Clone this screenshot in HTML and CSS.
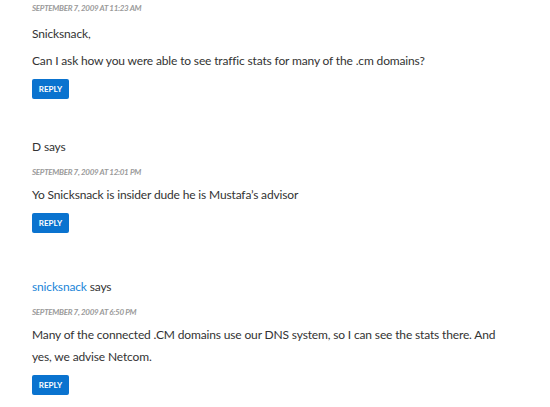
FILE: index.html
```html
<!DOCTYPE html>
<html>
<head>
<meta charset="utf-8">
<link rel="stylesheet" href="styles.css">
</head>
<body>
<div class="page">
  <div class="comment first">
    <div class="date">September 7, 2009 at 11:23 am</div>
    <p>Snicksnack,</p>
    <p>Can I ask how you were able to see traffic stats for many of the .cm domains?</p>
    <a class="reply">Reply</a>
  </div>
  <div class="comment">
    <div class="author">D <span class="says">says</span></div>
    <div class="date">September 7, 2009 at 12:01 pm</div>
    <p>Yo Snicksnack is insider dude he is Mustafa’s advisor</p>
    <a class="reply">Reply</a>
  </div>
  <div class="comment spaced">
    <div class="author"><a class="name">snicksnack</a> <span class="says">says</span></div>
    <div class="date">September 7, 2009 at 6:50 pm</div>
    <p>Many of the connected .CM domains use our DNS system, so I can see the stats there. And yes, we advise Netcom.</p>
    <a class="reply">Reply</a>
  </div>
</div>
</body>
</html>
```

FILE: styles.css
```css
html, body {
  margin: 0;
  padding: 0;
  background: #ffffff;
}
.page {
  font-family: Lato, "Liberation Sans", sans-serif;
  font-size: 12px;
  letter-spacing: -0.15px;
  color: #333333;
  padding: 2px 42px 0 32px;
}
.comment {
  display: flex;
  flex-direction: column;
  align-items: flex-start;
  margin-top: 37px;
}
.comment.first {
  margin-top: 0;
}
.comment.spaced {
  margin-top: 43px;
}
.author {
  line-height: 22px;
}
.name {
  color: #1a86d8;
}
.date {
  font-size: 8px;
  line-height: 12px;
  font-weight: 700;
  font-style: italic;
  text-transform: uppercase;
  letter-spacing: -0.3px;
  color: #9a9a9a;
  margin-top: 8px;
}
.first .date {
  margin-top: 0;
}
p {
  margin: 5px 0 0;
  line-height: 22px;
}
.date + p {
  margin-top: 6px;
}
.first .date + p {
  margin-top: 9px;
}
.reply {
  margin-top: 7px;
  background: #0a73cf;
  color: #ffffff;
  font-size: 8px;
  font-weight: 700;
  letter-spacing: 0;
  text-transform: uppercase;
  height: 20px;
  line-height: 20px;
  width: 37px;
  text-align: center;
  border-radius: 2px;
}
```
